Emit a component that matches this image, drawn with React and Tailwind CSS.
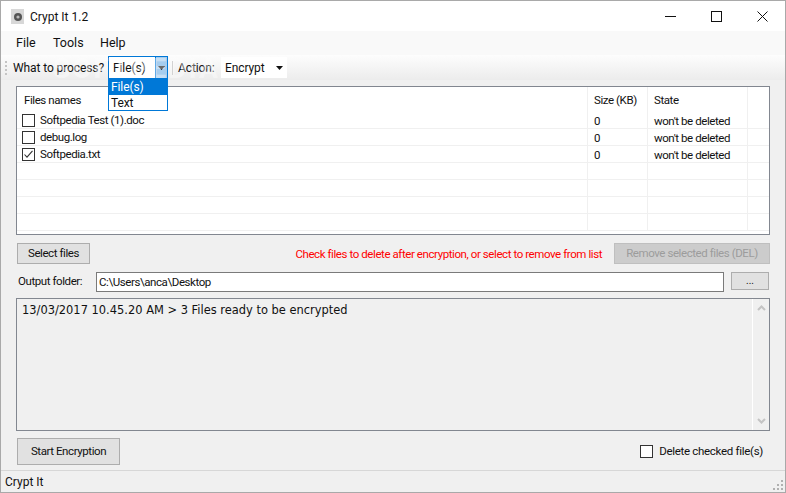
import React from 'react'

const rows = [
  { name: 'Softpedia Test (1).doc', checked: false },
  { name: 'debug.log', checked: false },
  { name: 'Softpedia.txt', checked: true },
  null,
  null,
  null,
  null,
]

function CheckBox({ checked }) {
  return (
    <span className="flex h-[13px] w-[13px] shrink-0 items-center justify-center border border-[#333333] bg-white">
      {checked && (
        <svg width="11" height="11" viewBox="0 0 11 11" fill="none" stroke="#333333" strokeWidth="1.1">
          <path d="M1.5 5.5 L4 8.2 L9.5 1.8" />
        </svg>
      )}
    </span>
  )
}

function Arrow() {
  return (
    <svg width="7" height="4" viewBox="0 0 7 4" fill="#111111">
      <path d="M0 0 H7 L3.5 4 Z" />
    </svg>
  )
}

function Row({ row }) {
  return (
    <div className="flex h-[17px] leading-[19px] text-[#111111]">
      <div className="flex w-[571px] items-center gap-[5px] border-r border-b border-[#f0f0f0] pl-[5px]">
        {row && <CheckBox checked={row.checked} />}
        {row && <span className="pt-[1px]">{row.name}</span>}
      </div>
      <div className="w-[60px] border-r border-b border-[#f0f0f0] pl-[6px]">{row && '0'}</div>
      <div className="w-[100px] border-r border-b border-[#f0f0f0] pl-[6px]">{row && "won't be deleted"}</div>
      <div className="flex-1 border-b border-[#f0f0f0]" />
    </div>
  )
}

export default function App() {
  return (
    <div className="flex h-[493px] w-[786px] flex-col overflow-hidden border border-[#a9a9a9] bg-[#f0f0f0] font-['Roboto','Liberation_Sans',sans-serif] text-[11.5px] tracking-[-0.42px] text-[#111111]">
      {/* title bar */}
      <div className="flex h-[30px] shrink-0 items-center bg-white">
        <svg className="ml-[10px]" width="13" height="15" viewBox="0 0 13 15">
          <rect width="13" height="15" fill="#d8d8d8" />
          <circle cx="7" cy="8" r="4" fill="#555555" />
          <circle cx="7" cy="8" r="1.6" fill="#bbbbbb" />
        </svg>
        <span className="ml-[6px] pt-[1px] text-[12px] tracking-normal">Crypt It 1.2</span>
        <div className="ml-auto flex items-center">
          <div className="flex h-[30px] w-[46px] items-center justify-center">
            <svg width="11" height="11" viewBox="0 0 11 11" stroke="#111111" fill="none"><path d="M0 5.5H11" /></svg>
          </div>
          <div className="flex h-[30px] w-[46px] items-center justify-center">
            <svg width="11" height="11" viewBox="0 0 11 11" stroke="#111111" fill="none"><rect x="0.5" y="0.5" width="10" height="10" /></svg>
          </div>
          <div className="flex h-[30px] w-[46px] items-center justify-center">
            <svg width="11" height="11" viewBox="0 0 11 11" stroke="#111111" fill="none"><path d="M0.5 0.5L10.5 10.5M10.5 0.5L0.5 10.5" /></svg>
          </div>
        </div>
      </div>

      {/* menu */}
      <div className="flex h-[24px] shrink-0 items-center bg-[#f9f9f9] pl-[15px] text-[12.5px] tracking-normal">
        <span className="w-[37px]">File</span>
        <span className="w-[47px]">Tools</span>
        <span>Help</span>
      </div>

      {/* toolbar */}
      <div className="relative flex h-[25px] shrink-0 items-center bg-gradient-to-b from-[#fdfdfd] to-[#ececec] pl-[4px] text-[12px] tracking-[-0.1px]">
        <div className="flex h-[14px] w-[2px] flex-col justify-between">
          <span className="h-[2px] bg-[#c4c4c4]" />
          <span className="h-[2px] bg-[#c4c4c4]" />
          <span className="h-[2px] bg-[#c4c4c4]" />
          <span className="h-[2px] bg-[#c4c4c4]" />
        </div>
        <span className="ml-[6px] w-[95px] whitespace-nowrap pt-[1px]">What to process?</span>
        <div className="flex h-[23px] w-[60px] items-center border border-[#0078d7] bg-white">
          <span className="pl-[4px] pt-[1px]">File(s)</span>
          <span className="ml-auto flex h-full w-[12px] items-center justify-center border-l border-[#0078d7] bg-[#a6cdee]">
            <Arrow />
          </span>
        </div>
        <span className="ml-[4px] h-[14px] w-px bg-[#b8b8b8]" />
        <span className="ml-[5px] w-[43px] pt-[1px]">Action:</span>
        <div className="flex h-[21px] w-[66px] items-center bg-white pl-[4px] pr-[4px]">
          <span className="pt-[1px]">Encrypt</span>
          <span className="ml-auto"><Arrow /></span>
        </div>

        {/* open combobox list */}
        <div className="absolute left-[107px] top-[23px] z-10 w-[60px] border border-[#0078d7] bg-white leading-[16px]">
          <div className="h-[16px] bg-[#0078d7] pl-[2px] text-white">File(s)</div>
          <div className="h-[15px] pl-[2px]">Text</div>
        </div>
        <span className="pointer-events-none absolute left-[52px] top-[1px] z-20 text-[28px] font-bold leading-[26px] tracking-[2px] text-white/40">SOFTPEDIA</span>
      </div>

      {/* content */}
      <div className="flex min-h-0 flex-1 flex-col bg-[#f0f0f0] pl-[15px] pr-[15px] pt-[6px]">
        <div className="h-[149px] shrink-0 overflow-hidden border border-[#828790] bg-white">
          <div className="flex h-[25px] items-center">
            <div className="w-[571px] border-r border-[#f0f0f0] pl-[7px] pt-[1px] leading-[24px]">Files names</div>
            <div className="w-[60px] border-r border-[#f0f0f0] pl-[6px] pt-[1px] leading-[24px]">Size (KB)</div>
            <div className="w-[100px] border-r border-[#f0f0f0] pl-[6px] pt-[1px] leading-[24px]">State</div>
          </div>
          {rows.map((row, i) => (
            <Row key={i} row={row} />
          ))}
        </div>

        <div className="mt-[8px] flex h-[21px] shrink-0 items-center pl-px">
          <button className="h-[21px] w-[73px] border border-[#adadad] bg-[#e1e1e1] pt-[1px]">Select files</button>
          <span className="ml-auto pt-[2px] text-[#ff0000]">Check files to delete after encryption, or select to remove from list</span>
          <button className="ml-[12px] h-[21px] w-[156px] border border-[#bfbfbf] bg-[#cccccc] pt-[1px] text-[#9c9c9c]">Remove selected files (DEL)</button>
        </div>

        <div className="mt-[8px] flex h-[20px] shrink-0 items-start pl-[2px]">
          <span className="w-[78px] whitespace-nowrap leading-[19px]">Output folder:</span>
          <div className="h-[20px] w-[628px] border border-[#7a7a7a] bg-white pl-[2px] leading-[18px]">C:\Users\anca\Desktop</div>
          <button className="ml-[7px] h-[18px] w-[38px] border border-[#adadad] bg-[#e1e1e1] text-[10px] leading-[16px] tracking-normal">...</button>
        </div>

        <div className="mt-[6px] flex h-[133px] shrink-0 border border-[#828790] bg-[#f0f0f0]">
          <div className="flex-1 pl-[5px] pt-[2px] font-['DejaVu_Sans',sans-serif] text-[11.45px] leading-[18px] tracking-normal">
            13/03/2017 10.45.20 AM &gt; 3 Files ready to be encrypted
          </div>
          <div className="flex w-[17px] flex-col items-center justify-between border-l border-white py-[6px]">
            <svg width="9" height="6" viewBox="0 0 9 6" fill="none" stroke="#c4c4c4" strokeWidth="2"><path d="M1 5L4.5 1.5L8 5" /></svg>
            <svg width="9" height="6" viewBox="0 0 9 6" fill="none" stroke="#c4c4c4" strokeWidth="2"><path d="M1 1L4.5 4.5L8 1" /></svg>
          </div>
        </div>

        <div className="mt-[7px] flex h-[27px] shrink-0 items-center pl-px">
          <button className="h-[27px] w-[103px] border border-[#adadad] bg-[#e1e1e1] pt-[1px]">Start Encryption</button>
          <label className="ml-auto mr-[7px] flex items-center gap-[6px]">
            <CheckBox checked={false} />
            <span className="pt-[1px] tracking-[-0.3px]">Delete checked file(s)</span>
          </label>
        </div>
      </div>

      {/* status bar */}
      <div className="relative flex h-[22px] shrink-0 items-center border-t border-[#d7d7d7] bg-[#f0f0f0] pl-[4px] text-[12px] tracking-normal">
        <span>Crypt It</span>
        <svg className="absolute bottom-[1px] right-[1px]" width="11" height="11" viewBox="0 0 11 11" fill="#b0b0b0">
          <rect x="8" y="0" width="2" height="2" />
          <rect x="4" y="4" width="2" height="2" />
          <rect x="8" y="4" width="2" height="2" />
          <rect x="0" y="8" width="2" height="2" />
          <rect x="4" y="8" width="2" height="2" />
          <rect x="8" y="8" width="2" height="2" />
        </svg>
      </div>
    </div>
  )
}
